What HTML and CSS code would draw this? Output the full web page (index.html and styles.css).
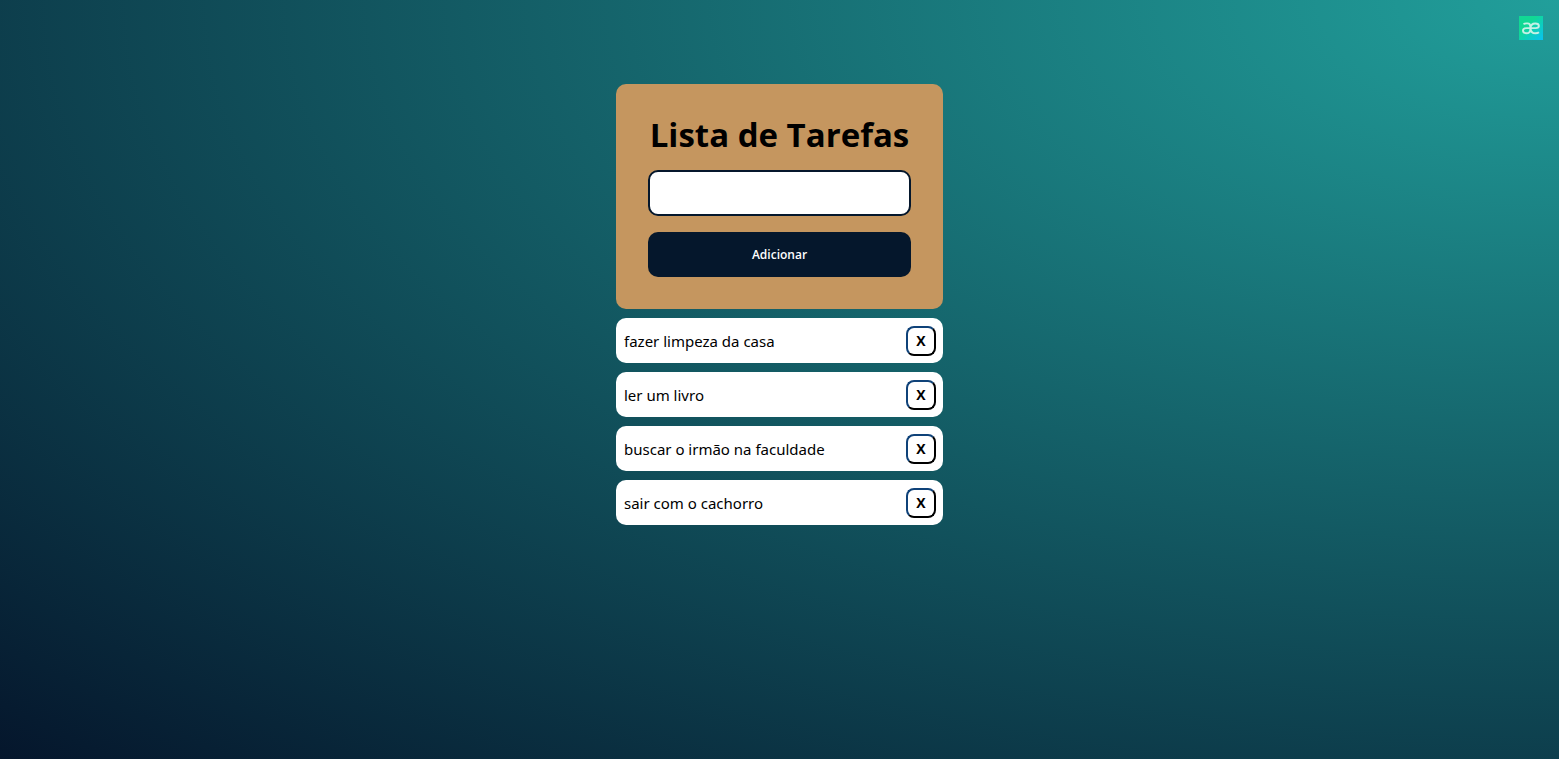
FILE: index.html
```html
<!DOCTYPE html>
<html lang="pt-BR">
<head>
<meta charset="utf-8">
<meta name="viewport" content="width=device-width, initial-scale=1">
<title>Lista de Tarefas</title>
<link rel="stylesheet" href="styles.css">
</head>
<body>
<div class="brand" aria-hidden="true">
  <svg class="brand-icon" viewBox="0 0 24 24">
    <defs><linearGradient id="brand-fill" x1="0" y1="0" x2="1" y2="1"><stop offset="0.35" stop-color="#11d894"/><stop offset="1" stop-color="#08c2f2"/></linearGradient></defs>
    <rect width="24" height="24" fill="url(#brand-fill)"/>
    <path d="M4.5 8.2C6 7.2 11.3 6.3 11.3 10.2V13.5C11.3 16.3 9.3 17.3 7.3 17.3C5.2 17.3 4 16.2 4 14.6C4 12.6 5.8 12.1 7.8 12.1H16.8C19.2 12.1 19.9 11.2 19.9 10C19.9 8.4 18.3 7.5 16.3 7.5C13.4 7.5 11.6 9.2 11.6 12.2C11.6 15.5 13.5 17.3 16.5 17.3C18 17.3 19.2 16.9 20 16.3" fill="none" stroke="#c3f1e5" stroke-width="1.9"/>
  </svg>
</div>
<main class="app">
  <form class="card" onsubmit="return false">
    <h1 class="title">Lista de Tarefas</h1>
    <input class="task-input" type="text" aria-label="Nova tarefa">
    <button class="add-button" type="submit">Adicionar</button>
  </form>
  <ul class="tasks">
    <li class="task"><span>fazer limpeza da casa</span><button class="remove" type="button">X</button></li>
    <li class="task"><span>ler um livro</span><button class="remove" type="button">X</button></li>
    <li class="task"><span>buscar o irmão na faculdade</span><button class="remove" type="button">X</button></li>
    <li class="task"><span>sair com o cachorro</span><button class="remove" type="button">X</button></li>
  </ul>
</main>
</body>
</html>
```
FILE: styles.css
```css
* {
  box-sizing: border-box;
  margin: 0;
  padding: 0;
}

body {
  min-height: 100vh;
  padding-top: 84px;
  background: radial-gradient(ellipse at top right, #219f9b, #05162c);
  color: #000;
  font-family: "Open Sans", "Noto Sans", sans-serif;
  font-size: 15px;
}

.brand {
  position: absolute;
  top: 16px;
  right: 16px;
}

.brand-icon {
  display: block;
  width: 24px;
  height: 24px;
}

.app {
  display: flex;
  flex-direction: column;
  gap: 9px;
  width: 100%;
  max-width: 327px;
  margin: 0 auto;
}

.card {
  display: flex;
  flex-direction: column;
  gap: 16px;
  padding: 32px;
  border-radius: 10px;
  background: #c5965f;
}

.title {
  font-size: 33px;
  font-weight: 700;
  line-height: 38px;
  text-align: center;
  white-space: nowrap;
}

.task-input {
  width: 100%;
  height: 46px;
  padding: 8px;
  border: 2px solid #05172c;
  border-radius: 10px;
  background: #fff;
  font: inherit;
}

.add-button {
  height: 45px;
  border: 0;
  border-radius: 10px;
  background: #05172c;
  color: #fff;
  font-family: inherit;
  font-size: 12px;
  font-weight: 600;
}

.tasks {
  display: flex;
  flex-direction: column;
  gap: 9px;
  list-style: none;
  font-family: "Noto Sans", "Open Sans", sans-serif;
}

.task {
  display: flex;
  align-items: center;
  justify-content: space-between;
  min-height: 45px;
  padding: 0 7px 0 8px;
  border-radius: 10px;
  background: #fff;
}

.remove {
  width: 30px;
  height: 30px;
  border: 2px solid;
  border-color: #0f4279 #000 #000 #0f4279;
  border-radius: 8px;
  background: #fff;
  color: #000;
  font-family: "Open Sans", "Noto Sans", sans-serif;
  font-size: 14px;
  font-weight: 700;
}
```
